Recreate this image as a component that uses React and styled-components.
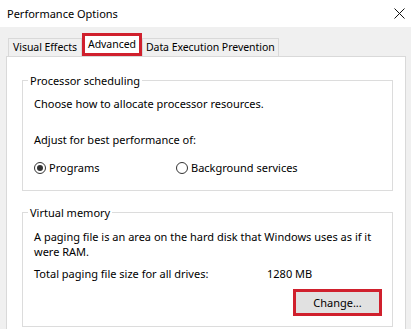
import React from "react";
import styled, { createGlobalStyle } from "styled-components";

const Global = createGlobalStyle`
  html, body { margin: 0; padding: 0; background: #ffffff; }
  body { font-family: "Noto Sans", "Open Sans", sans-serif; font-size: 11px; color: #000; }
`;

const Window = styled.div`
  width: 411px;
  height: 329px;
  overflow: hidden;
  display: flex;
  flex-direction: column;
  background: #f0f0f0;
`;

const TitleBar = styled.div`
  height: 27px;
  flex: none;
  background: #ffffff;
  display: flex;
  align-items: center;
  justify-content: space-between;
  padding: 0 6px 0 7px;
`;

const Title = styled.span`
  font-size: 11px;
  color: #000;
`;

const Body = styled.div`
  padding: 6px 5px 0 6px;
  display: flex;
  flex-direction: column;
`;

const TabStrip = styled.div`
  display: flex;
  align-items: flex-end;
  padding-left: 2px;
  position: relative;
  z-index: 1;
`;

const Tab = styled.div`
  height: 17px;
  line-height: ${(p) => (p.$active ? "16px" : "17px")};
  font-size: 10.5px;
  letter-spacing: -0.05px;
  padding: 0 ${(p) => p.$pad}px;
  background: ${(p) => (p.$active ? "#ffffff" : "#f0f0f0")};
  border: ${(p) => (p.$active ? "3px solid #d0202d" : "1px solid #d9d9d9")};
  border-bottom: ${(p) => (p.$active ? "3px solid #d0202d" : "none")};
  white-space: nowrap;
`;

const Panel = styled.div`
  background: #ffffff;
  border: 1px solid #d9d9d9;
  padding: 16px 12px 40px 15px;
  display: flex;
  flex-direction: column;
  gap: 14px;
`;

const Group = styled.fieldset`
  margin: 0;
  padding: 0 0 ${(p) => p.$pb}px 11px;
  border: 1px solid #dcdcdc;
  display: flex;
  flex-direction: column;
  min-width: 0;
`;

const Legend = styled.legend`
  padding: 0 2px;
  margin-left: -6px;
  line-height: 15px;
  color: #000;
`;

const Line = styled.div`
  line-height: 15px;
  margin-top: ${(p) => p.$mt || 0}px;
`;

const RadioRow = styled.div`
  display: flex;
  margin-top: 13px;
  line-height: 15px;
`;

const RadioItem = styled.label`
  display: flex;
  align-items: center;
  gap: 3px;
  width: ${(p) => p.$w}px;
`;

const RadioCircle = styled.span`
  width: 12px;
  height: 12px;
  box-sizing: border-box;
  border-radius: 50%;
  border: 1px solid #333333;
  display: flex;
  align-items: center;
  justify-content: center;
  background: #fff;
  &::after {
    content: "";
    width: 6px;
    height: 6px;
    border-radius: 50%;
    background: ${(p) => (p.$checked ? "#333333" : "transparent")};
  }
`;

const InfoRow = styled.div`
  display: flex;
  line-height: 15px;
  margin-top: 7px;
`;

const InfoLabel = styled.span`
  width: 233px;
`;

const ButtonRow = styled.div`
  display: flex;
  justify-content: flex-end;
  padding-right: 10px;
  margin-top: 8px;
`;

const Button = styled.button`
  width: 89px;
  height: 27px;
  box-sizing: border-box;
  border: 3px solid #d0202d;
  background: #e1e1e1;
  font-family: inherit;
  font-size: 11px;
  color: #000;
  padding: 0;
`;

function CloseIcon() {
  return (
    <svg width="11" height="11" viewBox="0 0 11 11">
      <path d="M0.5 0.5 L10.5 10.5 M10.5 0.5 L0.5 10.5" stroke="#111" strokeWidth="1" />
    </svg>
  );
}

export default function App() {
  return (
    <>
      <Global />
      <Window>
        <TitleBar>
          <Title>Performance Options</Title>
          <CloseIcon />
        </TitleBar>
        <Body>
          <TabStrip>
            <Tab $pad={4}>Visual Effects</Tab>
            <Tab $active $pad={3}>Advanced</Tab>
            <Tab $pad={3}>Data Execution Prevention</Tab>
          </TabStrip>
          <Panel>
            <Group $pb={15}>
              <Legend>Processor scheduling</Legend>
              <Line $mt={8}>Choose how to allocate processor resources.</Line>
              <Line $mt={21}>Adjust for best performance of:</Line>
              <RadioRow>
                <RadioItem $w={142}>
                  <RadioCircle $checked />
                  Programs
                </RadioItem>
                <RadioItem>
                  <RadioCircle />
                  Background services
                </RadioItem>
              </RadioRow>
            </Group>
            <Group $pb={10}>
              <Legend>Virtual memory</Legend>
              <Line $mt={9}>
                A paging file is an area on the hard disk that Windows uses as if it were RAM.
              </Line>
              <InfoRow>
                <InfoLabel>Total paging file size for all drives:</InfoLabel>
                <span>1280 MB</span>
              </InfoRow>
              <ButtonRow>
                <Button>Change...</Button>
              </ButtonRow>
            </Group>
          </Panel>
        </Body>
      </Window>
    </>
  );
}
